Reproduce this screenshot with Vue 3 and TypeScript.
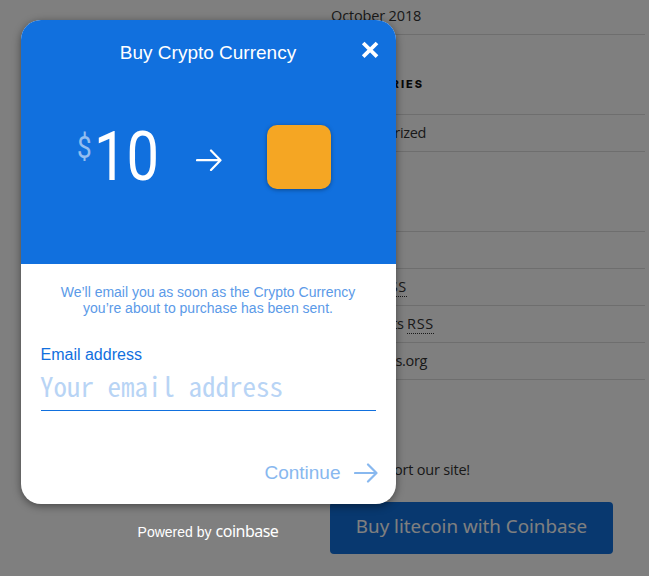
<script setup lang="ts">
interface Entry {
  text: string
  abbr?: string
  width: number
}

const categories: Entry[] = [{ text: 'Uncategorized', width: 96 }]
const meta: Entry[] = [
  { text: 'Log in', width: 42 },
  { text: 'Entries ', abbr: 'RSS', width: 77 },
  { text: 'Comments ', abbr: 'RSS', width: 104 },
  { text: 'WordPress.org', width: 97 },
]
</script>

<template>
  <div class="screen">
    <aside class="sidebar">
      <ul class="list archives"><li>October 2018</li></ul>
      <h2 class="title">CATEGORIES</h2>
      <ul class="list">
        <li v-for="item in categories" :key="item.text">
          <span class="entry" :style="{ width: item.width + 'px' }">{{ item.text }}</span>
        </li>
      </ul>
      <h2 class="title meta-title">META</h2>
      <ul class="list">
        <li v-for="item in meta" :key="item.text">
          <span class="entry" :style="{ width: item.width + 'px' }">{{ item.text }}<abbr v-if="item.abbr">{{ item.abbr }}</abbr></span>
        </li>
      </ul>
      <p class="support"><span>Support our site!</span></p>
      <a class="buy">Buy litecoin with Coinbase</a>
    </aside>

    <div class="overlay">
      <section class="modal">
        <header class="head">
          <h1>Buy Crypto Currency</h1>
          <button class="close" aria-label="Close">
            <svg width="18" height="18" viewBox="0 0 18 18"><path d="M2.2 2L16 15.6M16 2L2.2 15.6" /></svg>
          </button>
          <div class="exchange">
            <div class="amount"><span class="sign">$</span><span class="value">10</span></div>
            <svg class="arrow" width="26" height="28" viewBox="0 0 26 28"><path d="M1 17.2H24M15 7.5L24.5 17.2L15 26.9" /></svg>
            <div class="coin"></div>
          </div>
        </header>
        <div class="body">
          <p class="note">We’ll email you as soon as the Crypto Currency<br />you’re about to purchase has been sent.</p>
          <label class="label">Email address</label>
          <div class="field">Your email address</div>
          <div class="continue">
            <span>Continue</span>
            <svg class="arrow" width="24" height="20" viewBox="0 0 24 20"><path d="M1 10H22M14 1.5L22.5 10L14 18.5" /></svg>
          </div>
        </div>
      </section>
      <footer class="powered">Powered by <b>coinbase</b></footer>
    </div>
  </div>
</template>

<style>
body {
  margin: 0;
  overflow: hidden;
}
</style>

<style scoped>
.screen {
  position: relative;
  width: 649px;
  height: 576px;
  overflow: hidden;
  background: #fff;
}
.sidebar {
  width: 315px;
  margin-left: 330px;
  color: #333;
  font: 400 14.5px/22px "Open Sans", sans-serif;
}
.list {
  margin: 0;
  padding: 0;
  list-style: none;
}
.list li {
  box-sizing: border-box;
  height: 37px;
  padding: 7px 0;
  border-bottom: 1px solid #ddd;
  white-space: nowrap;
}
.archives li {
  height: 35px;
  padding-top: 5px;
  padding-left: 1px;
  letter-spacing: -0.15px;
}
.title {
  display: flex;
  align-items: center;
  justify-content: flex-end;
  box-sizing: border-box;
  width: 94px;
  height: 79px;
  margin: 0;
  padding-top: 18px;
  color: #111;
  font: 800 11px/18px Inter, sans-serif;
  letter-spacing: 2px;
}
.title + .list {
  border-top: 1px solid #ddd;
}
.meta-title {
  width: 50px;
}
.entry {
  display: flex;
  justify-content: flex-end;
  white-space: pre;
  letter-spacing: -0.35px;
}
abbr {
  height: 20px;
  border-bottom: 1px dotted #333;
  letter-spacing: 0.7px;
}
.support {
  display: flex;
  justify-content: flex-end;
  width: 140px;
  margin: 79px 0 0;
  white-space: nowrap;
  letter-spacing: -0.2px;
}
.buy {
  display: flex;
  align-items: center;
  justify-content: center;
  box-sizing: border-box;
  width: 283px;
  height: 52px;
  margin-top: 21px;
  padding-bottom: 4px;
  border-radius: 4px;
  background: #1070de;
  color: #fff;
  font: 400 18.8px/24px "Noto Sans", sans-serif;
  white-space: nowrap;
}
.overlay {
  position: absolute;
  inset: 0;
  box-sizing: border-box;
  padding: 20px 0 0 21px;
  background: rgba(0, 0, 0, 0.5);
  font-family: "Liberation Sans", sans-serif;
}
.modal {
  width: 375px;
  height: 484px;
  border-radius: 20px;
  overflow: hidden;
  background: #fff;
  box-shadow: 0 2px 8px rgba(0, 0, 0, 0.45);
}
.head {
  position: relative;
  height: 244px;
  background: #1170de;
  color: #fff;
}
h1 {
  margin: 0;
  padding: 22px 1px 0 0;
  font-size: 19px;
  font-weight: 400;
  line-height: 22px;
  text-align: center;
}
.close {
  position: absolute;
  top: 21px;
  right: 17px;
  width: 18px;
  height: 18px;
  padding: 0;
  border: 0;
  background: none;
}
.close svg {
  display: block;
}
svg path {
  fill: none;
  stroke: currentColor;
  stroke-width: 2.2;
  stroke-linecap: round;
  stroke-linejoin: round;
}
.close path {
  stroke: #fff;
  stroke-width: 3.8;
  stroke-linecap: butt;
}
.exchange {
  display: flex;
  align-items: center;
  height: 64px;
  margin-top: 61px;
  padding-left: 55px;
}
.amount {
  display: flex;
  width: 120px;
  height: 64px;
}
.sign,
.value {
  transform: scaleX(0.84);
  transform-origin: 0 0;
  font-family: Roboto, sans-serif;
}
.sign {
  width: 17px;
  margin-left: 1px;
  font-size: 31px;
  line-height: 46px;
  opacity: 0.55;
}
.value {
  font-size: 69px;
  line-height: 63px;
}
.coin {
  width: 64px;
  height: 64px;
  margin-left: 45px;
  border-radius: 10px;
  background: #f5a623;
  box-shadow: 0 1px 4px rgba(0, 0, 0, 0.35);
}
.body {
  height: 240px;
  padding: 20px 20px 0;
  box-sizing: border-box;
  color: #1170de;
}
.note {
  margin: 0;
  padding-right: 1px;
  font-size: 14px;
  line-height: 16px;
  text-align: center;
  color: #5b9ae8;
}
.label {
  display: block;
  margin-top: 30px;
  margin-left: -0.5px;
  font-size: 16px;
  line-height: 18px;
}
.field {
  box-sizing: border-box;
  height: 47px;
  border-bottom: 1px solid #1170de;
  color: #b8d4f5;
  font: 400 27px/44px "Noto Sans CJK JP", monospace;
  font-feature-settings: "hwid";
  text-indent: -1px;
  white-space: nowrap;
}
.continue {
  display: flex;
  align-items: center;
  justify-content: flex-end;
  height: 24px;
  margin-top: 50px;
  color: #88b8ef;
  font-size: 19px;
}
.continue svg {
  margin-left: 13px;
  margin-right: -1.5px;
}
.powered {
  display: flex;
  align-items: baseline;
  justify-content: center;
  gap: 4px;
  width: 374px;
  margin-top: 17px;
  color: #fff;
  font-size: 14px;
  line-height: 20px;
}
.powered b {
  font: 400 16px/20px "Noto Sans", sans-serif;
  letter-spacing: -0.5px;
}
</style>
